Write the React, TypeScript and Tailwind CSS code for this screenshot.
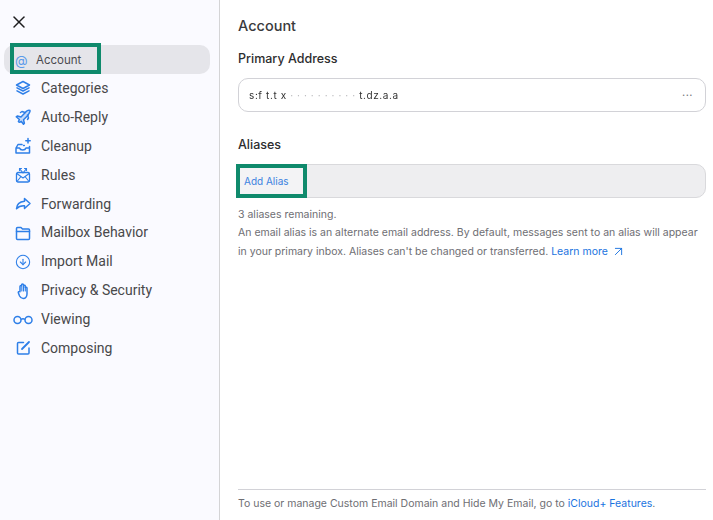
import React from 'react';
import { X, CircleArrowDown, ArrowUpRight } from 'lucide-react';

const IconBase = ({ children }: { children: React.ReactNode }) => (
  <svg width="18" height="18" viewBox="0 0 18 18" fill="none" stroke="currentColor" strokeWidth="1.500" strokeLinecap="round" strokeLinejoin="round">
    {children}
  </svg>
);

const LayersIcon = () => (
  <IconBase>
    <path d="M9 2.500 15.500 6 9 9.500 2.500 6z" />
    <path d="M3 8.800 9 12l6-3.200M3 11.800 9 15l6-3.200" />
  </IconBase>
);

const PlaneIcon = () => (
  <IconBase>
    <path d="M16 2.500c-1.500-.6-3 .2-4.200 1.400L7 9 3.500 8l-1.300.8 3.200 2.700-1 2 .8.8 2-1 2.300 3 .9-1-.9-3.500 4.800-4.900C14.200 5.900 16.600 4 16 2.500z" fill="currentColor" fillOpacity="0.25" />
    <path d="M11 4.500 8 3.500 6.500 4.500M13.500 7l1 3-1 1.500" />
  </IconBase>
);

const CleanupIcon = () => (
  <IconBase>
    <path d="M2 11V16h13.500v-5M2 11l2-3.500h4M2 11h3.500c.5 1.500 1.800 2 3.200 2s2.800-.5 3.300-2h3.500V9.500" />
    <path d="M14 1.500v4.500M11.800 3.800h4.400" />
    <path d="M9.500 8.500h.8" />
  </IconBase>
);

const RulesIcon = () => (
  <IconBase>
    <rect x="2.500" y="6.500" width="13" height="9.500" rx="1.500" strokeWidth="1.300" />
    <path d="M2.800 7.500 9 12l6.200-4.500M3 15.500 7 10.500M15 15.500 11 10.500" strokeWidth="1.100" />
    <path d="M5.500 2.500 9 7l3.500-4.500M10.500 2.500h2v2M7.500 2.500h-2v2" strokeWidth="1.100" />
  </IconBase>
);

const ForwardIcon = () => (
  <IconBase>
    <path d="M10.500 3.500 16 8.500l-5.500 5V10.800c-3.500-.2-6 .7-8 3 .2-4 3-7 8-7.500z" />
  </IconBase>
);

const FolderIcon = () => (
  <IconBase>
    <path d="M2.500 6.500V4.500a1 1 0 0 1 1-1h3.500L8.500 5H14.500a1 1 0 0 1 1 1v8.500a1 1 0 0 1-1 1h-11a1 1 0 0 1-1-1z" />
    <path d="M2.500 7.500h13" />
  </IconBase>
);

const HandIcon = () => (
  <IconBase>
    <path d="M6 9V4.500a1 1 0 0 1 1.500-.9V3a1 1 0 0 1 2 0v.6a1 1 0 0 1 1.800.6V5.500a1 1 0 0 1 1.700.6v6c0 2.500-1.600 4.400-3.800 4.400-1.800 0-2.800-.9-3.600-2.500L4.400 11c-.6-1.200.8-2 1.600-1.200" />
    <path d="M7.800 4V9M9.500 3.500V9M11.300 4.500V9" strokeWidth="1.100" />
  </IconBase>
);

const GlassesIcon = () => (
  <svg width="20" height="10" viewBox="0 0 20 10" fill="none" stroke="currentColor" strokeWidth="1.500">
    <circle cx="4.500" cy="5" r="3.500" />
    <circle cx="15.500" cy="5" r="3.500" />
    <path d="M8 4.500c1-.8 3-.8 4 0" />
  </svg>
);

const ComposeIcon = () => (
  <IconBase>
    <path d="M9.500 3.500H4.500a1 1 0 0 0-1 1v9.500a1 1 0 0 0 1 1H14a1 1 0 0 0 1-1V9" />
    <path d="M8 10 15 3" strokeWidth="1.800" />
  </IconBase>
);

const navItems: { label: string; icon: React.ReactNode }[] = [
  { label: 'Categories', icon: <LayersIcon /> },
  { label: 'Auto-Reply', icon: <PlaneIcon /> },
  { label: 'Cleanup', icon: <CleanupIcon /> },
  { label: 'Rules', icon: <RulesIcon /> },
  { label: 'Forwarding', icon: <ForwardIcon /> },
  { label: 'Mailbox Behavior', icon: <FolderIcon /> },
  { label: 'Import Mail', icon: <CircleArrowDown size={16} strokeWidth={1.6} /> },
  { label: 'Privacy & Security', icon: <HandIcon /> },
  { label: 'Viewing', icon: <GlassesIcon /> },
  { label: 'Composing', icon: <ComposeIcon /> },
];

const Sidebar = () => (
  <aside className="w-[220px] shrink-0 border-r border-[#d4d4d6] bg-[#fafaff] px-1 pt-3">
    <button className="ml-[5px] mb-[13px] flex h-5 w-5 items-center justify-center text-[#1d1d1f]">
      <X size={20} strokeWidth={1.8} />
    </button>
    <div className="relative flex h-[29px] w-[206px] items-center rounded-[10px] bg-[#e5e5ea] pt-0.5 text-[11.500px] text-[#4a4a4f]">
      <span className="ml-[11px] w-[21px] text-[13px] text-[#5b9bea]">@</span>
      <span>Account</span>
      <div className="absolute -top-0.5 left-1.5 h-[31px] w-[91px] border-4 border-[#0f8a6c]" />
    </div>
    <nav className="flex flex-col">
      {navItems.map((item) => (
        <div key={item.label} className="flex h-[28.900px] items-center font-['Roboto',sans-serif] text-[14px] text-[#48484a]">
          <span className="flex w-[37px] shrink-0 justify-center text-[#2e7fe8]">{item.icon}</span>
          <span>{item.label}</span>
        </div>
      ))}
    </nav>
  </aside>
);

const Content = () => (
  <main className="flex min-w-0 flex-1 flex-col pb-[9px] pl-[18px] pr-[7px] pt-[17px]">
    <h1 className="text-[14.500px] leading-[18px] font-medium text-[#3a3a3c]">Account</h1>
    <h2 className="mt-[15px] text-[12.500px] leading-[17px] font-medium text-[#2c2c2e]">Primary Address</h2>
    <div className="mt-[11px] flex h-[34px] items-center justify-between rounded-[10px] border border-[#d2d2d7] bg-white pl-[10px] pr-[12px]">
      <span className="text-[10px] tracking-[0.6px] text-[#333] blur-[0.4px]">
        s:f t.t x <span className="text-[#b5b5b8]">· · · · · · · · · ·</span> t.dz.a.a
      </span>
      <span className="text-[11px] leading-none tracking-[0.5px] text-[#77777c]">···</span>
    </div>
    <h2 className="mt-[24px] text-[12.500px] leading-[17px] font-medium text-[#2c2c2e]">Aliases</h2>
    <div className="relative mt-[11px] flex h-[34px] items-center rounded-[10px] border border-[#d9d9dc] bg-[#eeeef0] pl-[5px] pt-px">
      <div className="absolute -top-px -left-[3px] h-[34px] w-[71px] border-4 border-[#0f8a6c] bg-[#f3f3f5]" />
      <span className="relative text-[10px] text-[#3b82e0]">Add Alias</span>
    </div>
    <div className="mt-[8px] text-[10.500px] leading-[18.400px] text-[#6e6e73]">
      <p>3 aliases remaining.</p>
      <p>
        An email alias is an alternate email address. By default, messages sent to an alias will appear in your primary inbox. Aliases can't be changed or transferred.{' '}
        <span className="whitespace-nowrap text-[#1a73e0]">
          Learn more
          <ArrowUpRight size={15} strokeWidth={1.5} className="ml-[3px] inline-block" />
        </span>
      </p>
    </div>
    <div className="mt-auto border-t border-[#d2d2d7] pt-[7px] text-[10.500px] leading-[14px] text-[#6e6e73]">
      To use or manage Custom Email Domain and Hide My Email, go to <span className="text-[#1a73e0]">iCloud+ Features</span>.
    </div>
  </main>
);

const App: React.FC = () => {
  return (
    <div className="flex h-[520px] w-[713px] overflow-hidden bg-white font-['Inter',sans-serif]">
      <Sidebar />
      <Content />
    </div>
  );
};

export default App;
